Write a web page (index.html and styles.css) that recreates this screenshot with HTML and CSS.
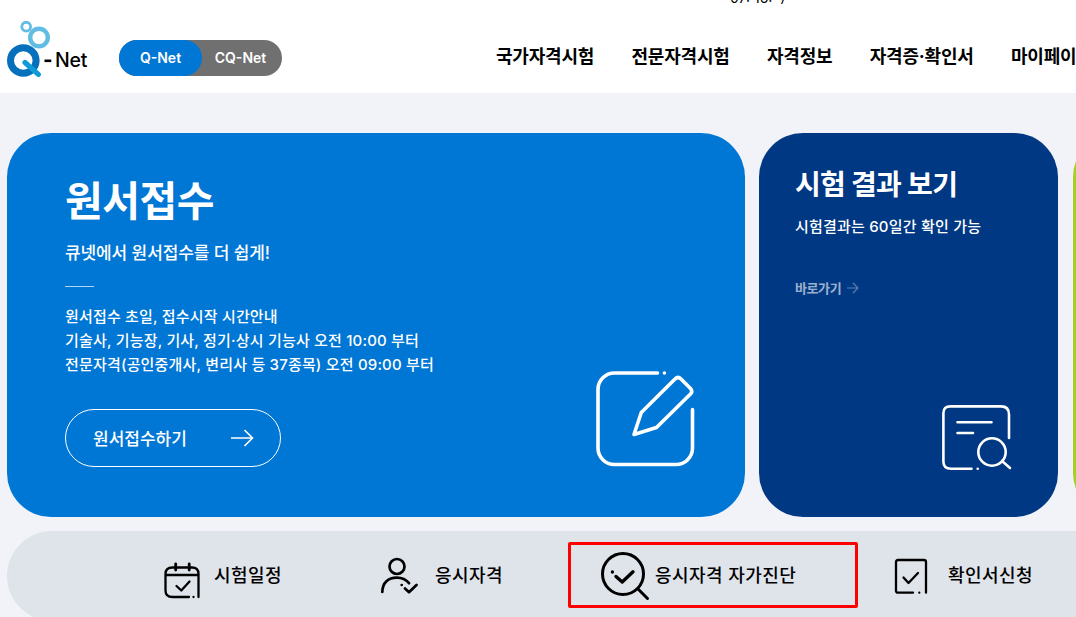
FILE: index.html
```html
<!DOCTYPE html>
<html lang="ko">
<head>
  <meta charset="UTF-8">
  <meta name="viewport" content="width=device-width, initial-scale=1.0">
  <title>Q-Net</title>
  <link rel="stylesheet" href="styles.css">
</head>
<body>

  <header class="header">
    <div class="session-time">07: 16:  )</div>
    <div class="header-inner">
      <a class="logo" href="#">
        <svg width="84" height="60" viewBox="0 0 84 60">
          <circle cx="19.2" cy="5.7" r="4.4" fill="none" stroke="#62bde4" stroke-width="2.8"/>
          <circle cx="32" cy="16.5" r="8.8" fill="none" stroke="#62bde4" stroke-width="4.4"/>
          <circle cx="16.3" cy="39.5" r="12.8" fill="none" stroke="#0670bd" stroke-width="7"/>
          <path d="M18 41.500L31.3 53.4" stroke="#0e9bd8" stroke-width="5.2" stroke-linecap="round"/>
          <path d="M37.5 39.8H44.3" stroke="#000" stroke-width="2.6"/>
          <text class="logo-text" x="48" y="46.4" textLength="32.5">Net</text>
        </svg>
      </a>
      <div class="site-switch">
        <a class="switch-item active" href="#">Q-Net</a>
        <a class="switch-item" href="#">CQ-Net</a>
      </div>
      <nav class="nav">
        <a href="#">국가자격시험</a>
        <a href="#">전문자격시험</a>
        <a href="#">자격정보</a>
        <a href="#">자격증·확인서</a>
        <a href="#">마이페이지</a>
      </nav>
    </div>
  </header>

  <main class="main">
    <div class="cards">
      <section class="card apply">
        <h2>원서접수</h2>
        <p class="lead">큐넷에서 원서접수를 더 쉽게!</p>
        <div class="line"></div>
        <p class="info">원서접수 초일, 접수시작 시간안내<br>기술사, 기능장, 기사, 정기·상시 기능사 오전 10:00 부터<br>전문자격(공인중개사, 변리사 등 37종목) 오전 09:00 부터</p>
        <a class="apply-btn" href="#">
          <span>원서접수하기</span>
          <svg width="23" height="18" viewBox="0 0 23 18" fill="none" stroke="#fff" stroke-width="1.6">
            <path d="M0 9H21.5M13.5 1L21.5 9L13.5 17"/>
          </svg>
        </a>
        <svg class="card-icon" width="100" height="98" viewBox="0 0 100 98" fill="none" stroke="#fff" stroke-width="3.6" stroke-linecap="round" stroke-linejoin="round">
          <path d="M62.500 3H19.500A16.500 16.500 0 0 0 3 19.500V78A16.500 16.500 0 0 0 19.500 94.500H81A16.500 16.500 0 0 0 97.500 78V39.500M69.400 3V3"/>
          <path d="M39 64.500L46.300 42.500L80 9Q83 6 86 9L95.500 18.500Q98 21.500 95.500 24L61.500 57.500Z"/>
        </svg>
      </section>

      <section class="card result">
        <h2>시험 결과 보기</h2>
        <p class="lead">시험결과는 60일간 확인 가능</p>
        <a class="go-link" href="#">
          <span>바로가기</span>
          <svg width="12" height="12" viewBox="0 0 12 12" fill="none" stroke="#fff" stroke-width="1.200">
            <path d="M0 6H11M6 1L11 6L6 11"/>
          </svg>
        </a>
        <svg class="card-icon" width="72" height="68" viewBox="0 0 72 68" fill="none" stroke="#fff" stroke-width="2.600" stroke-linecap="round" stroke-linejoin="round">
          <path d="M30.500 64.700H10Q2.400 64.700 2.400 57.500V9Q2.400 2.400 9.500 2.400H60Q68 2.400 68 10.500V34M36.700 64.700V64.700"/>
          <path d="M16.500 18.200H50.500M16.500 29H32"/>
          <circle cx="51" cy="48" r="13.700"/>
          <path d="M61 57L69 64"/>
        </svg>
      </section>

      <section class="card next"></section>
    </div>

    <div class="quick">
      <a class="quick-item schedule" href="#">
        <svg width="38" height="38" viewBox="0 0 38 38" fill="none" stroke="#000" stroke-width="2.300" stroke-linecap="round" stroke-linejoin="round">
          <path d="M26 35H9.500Q2.500 35 2.500 28.500V12Q2.500 5.500 9.500 5.500H29Q35.500 5.500 35.500 12V35M30.500 35V35M2.500 13H35.500"/>
          <path d="M12.700 2V8M26.200 2V8" stroke-width="2.800"/>
          <path d="M13.500 24L18.300 28.500L26.500 19.500"/>
        </svg>
        <span>시험일정</span>
      </a>
      <a class="quick-item person" href="#">
        <svg width="38" height="38" viewBox="0 0 38 38" fill="none" stroke="#000" stroke-width="2.700" stroke-linecap="round" stroke-linejoin="round">
          <circle cx="17" cy="9.500" r="7.500"/>
          <path d="M2.300 35C2.300 25.500 8.500 20.600 16.800 20.600C22 20.600 26 22.500 29 26.200M21.700 28V28M25 31.500L29 35.200L36.500 28"/>
        </svg>
        <span>응시자격</span>
      </a>
      <a class="quick-item diagnosis" href="#">
        <svg width="50" height="50" viewBox="0 0 50 50" fill="none" stroke="#000" stroke-width="3" stroke-linecap="round" stroke-linejoin="round">
          <circle cx="23" cy="23" r="20.500"/>
          <path d="M37.800 37.800L47.500 47.500"/>
          <path d="M16 25.500L22.200 31L33 20.800M12.400 21V21" stroke-width="3.400"/>
        </svg>
        <span>응시자격 자가진단</span>
      </a>
      <a class="quick-item document" href="#">
        <svg width="34" height="38" viewBox="0 0 34 38" fill="none" stroke="#000" stroke-width="2.300" stroke-linecap="round" stroke-linejoin="round">
          <path d="M19 35.700H4Q2 35.700 2 33.700V5Q2 3 4 3H30Q32 3 32 5V35.700M25.300 35.700V35.700"/>
          <path d="M9.500 20.500L14.500 26L24 16"/>
        </svg>
        <span>확인서신청</span>
      </a>
    </div>
  </main>

</body>
</html>
```

FILE: styles.css
```css
* {
  box-sizing: border-box;
}
body {
  margin: 0;
  height: 617px;
  overflow: hidden;
  background-color: #f1f3f8;
  color: #000;
  font-family: Inter, "Noto Sans CJK KR", sans-serif;
}
a {
  color: inherit;
  text-decoration: none;
}
h2, p {
  margin: 0;
}
svg {
  display: block;
  flex: none;
}

/* header */
.header {
  position: relative;
  height: 93px;
  padding: 21px 0 0 7px;
  background-color: #fff;
  overflow: hidden;
}
.session-time {
  position: absolute;
  top: -13px;
  left: 730px;
  font-size: 14px;
  line-height: 22px;
  white-space: pre;
}
.header-inner {
  display: flex;
  white-space: nowrap;
}
.logo {
  flex: none;
  width: 112px;
}
.logo-text {
  font-size: 19.5px;
  font-weight: 500;
}
.site-switch {
  display: flex;
  flex: none;
  width: 163px;
  height: 36px;
  margin-top: 19px;
  border-radius: 18px;
  background-color: #707070;
  color: #fff;
  font-size: 14px;
  font-weight: 600;
  line-height: 36px;
  text-align: center;
}
.switch-item {
  width: 77px;
}
.switch-item.active {
  width: 83px;
  border-radius: 18px;
  background-color: #0076d5;
}
.nav {
  display: flex;
  flex: none;
  gap: 37.3px;
  margin: 23px 0 0 214px;
  font-size: 18px;
  font-weight: 700;
  line-height: 26px;
  letter-spacing: -0.2px;
}

/* cards */
.main {
  padding: 40px 0 0 7px;
}
.cards {
  display: flex;
  gap: 14px;
  width: 1366px;
}
.card {
  position: relative;
  flex: none;
  height: 384px;
  border-radius: 44px;
  color: #fff;
  white-space: nowrap;
}
.apply {
  width: 738px;
  padding: 39px 58px;
  background-color: #0076d5;
}
.apply h2 {
  font-size: 41px;
  line-height: 58px;
  letter-spacing: -0.5px;
}
.apply .lead {
  margin-top: 10px;
  font-size: 17px;
  font-weight: 500;
  line-height: 26px;
  letter-spacing: -0.1px;
}
.line {
  width: 29px;
  height: 1px;
  margin: 20px 0 18px;
  background-color: #b2d5f2;
}
.info {
  font-size: 15px;
  font-weight: 500;
  line-height: 24px;
  letter-spacing: 0.18px;
}
.apply-btn {
  display: flex;
  align-items: center;
  justify-content: space-between;
  width: 216px;
  height: 58px;
  margin-top: 32px;
  padding: 0 26px 0 27px;
  border: 1px solid #fff;
  border-radius: 29px;
  font-size: 17px;
  font-weight: 500;
}
.apply-btn span {
  padding-bottom: 2px;
}
.card-icon {
  position: absolute;
}
.apply .card-icon {
  right: 50px;
  bottom: 49px;
}
.result {
  width: 299px;
  padding: 32px 36px;
  background-color: #003883;
}
.result h2 {
  font-size: 28px;
  font-weight: 700;
  line-height: 40px;
  letter-spacing: -0.7px;
}
.result .lead {
  margin-top: 10px;
  font-size: 15px;
  font-weight: 500;
  line-height: 24px;
  letter-spacing: 0.2px;
}
.result .card-icon {
  right: 45px;
  bottom: 45px;
}
.go-link {
  display: flex;
  align-items: center;
  gap: 6px;
  margin-top: 39px;
  font-size: 13px;
  font-weight: 700;
  line-height: 20px;
  letter-spacing: -0.4px;
  opacity: 0.6;
}
.go-link svg {
  opacity: 0.6;
}
.next {
  margin-left: 1px;
  width: 300px;
  background-color: #a5d023;
}

/* quick menu */
.quick {
  display: flex;
  width: 1366px;
  height: 90px;
  margin-top: 14px;
  padding-left: 156px;
  border-radius: 45px;
  background-color: #dfe3ea;
  font-size: 18px;
  font-weight: 500;
  line-height: 26px;
  letter-spacing: 0.45px;
  white-space: nowrap;
}
.quick-item {
  display: flex;
  align-items: flex-start;
  flex: none;
}
.quick-item span {
  margin-top: 32px;
}
.schedule {
  width: 217px;
  gap: 13px;
}
.schedule svg {
  margin-top: 31px;
}
.person {
  width: 188px;
  gap: 17px;
}
.person svg {
  margin-top: 26px;
}
.diagnosis {
  width: 290px;
  height: 66px;
  margin-top: 11px;
  padding-left: 29px;
  gap: 5px;
  border: 3px solid #ff0000;
  border-radius: 2px;
}
.diagnosis svg {
  margin-top: 6px;
}
.diagnosis span {
  margin-top: 18px;
}
.document {
  margin-left: 36px;
  gap: 20px;
}
.document svg {
  margin-top: 26px;
}
```
